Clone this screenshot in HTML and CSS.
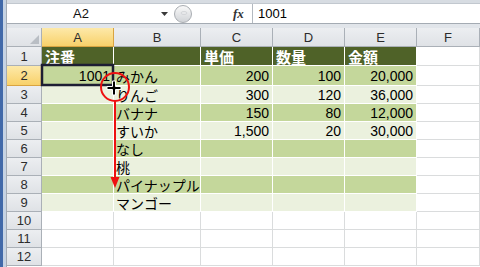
FILE: index.html
```html
<!DOCTYPE html>
<html lang="ja">
<head>
  <meta charset="UTF-8">
  <title>注番 - Excel</title>
  <link rel="stylesheet" href="styles.css">
</head>
<body>
  <div class="window">
    <div class="edge"></div>
    <div class="main">
      <div class="ribbon-edge"></div>

      <!-- Name box + formula bar -->
      <div class="formula-bar">
        <div class="name-box">A2</div>
        <div class="name-drop">
          <svg width="7" height="4" viewBox="0 0 7 4"><path d="M0 0h7L3.5 4z" fill="#3a3a3a"/></svg>
        </div>
        <svg class="splitter" width="20" height="19" viewBox="0 0 20 19">
          <defs>
            <linearGradient id="knob" x1="0" y1="0" x2="0" y2="1">
              <stop offset="0" stop-color="#fafafa"/>
              <stop offset="1" stop-color="#cfd2d6"/>
            </linearGradient>
          </defs>
          <circle cx="11" cy="10" r="8.5" fill="url(#knob)" stroke="#a9adb2"/>
          <ellipse cx="12" cy="9" rx="3" ry="1.5" fill="#e9eaec" stroke="#c4c7cb" stroke-width="0.6"/>
        </svg>
        <div class="fx">fx</div>
        <div class="formula-input">1001</div>
      </div>
      <div class="bar-gap"></div>

      <!-- Worksheet -->
      <div class="sheet">
        <div class="hd corner"><span class="corner-tri"></span></div>
        <div class="hd sel">A</div>
        <div class="hd">B</div>
        <div class="hd">C</div>
        <div class="hd">D</div>
        <div class="hd">E</div>
        <div class="hd">F</div>

        <div class="hd">1</div>
        <div class="cell t-head">注番</div>
        <div class="cell t-head"></div>
        <div class="cell t-head">単価</div>
        <div class="cell t-head">数量</div>
        <div class="cell t-head">金額</div>
        <div class="cell"></div>

        <div class="hd sel">2</div>
        <div class="cell t-a num">1001</div>
        <div class="cell t-a">みかん</div>
        <div class="cell t-a num">200</div>
        <div class="cell t-a num">100</div>
        <div class="cell t-a num">20,000</div>
        <div class="cell"></div>

        <div class="hd">3</div>
        <div class="cell t-b"></div>
        <div class="cell t-b">りんご</div>
        <div class="cell t-b num">300</div>
        <div class="cell t-b num">120</div>
        <div class="cell t-b num">36,000</div>
        <div class="cell"></div>

        <div class="hd">4</div>
        <div class="cell t-a"></div>
        <div class="cell t-a">バナナ</div>
        <div class="cell t-a num">150</div>
        <div class="cell t-a num">80</div>
        <div class="cell t-a num">12,000</div>
        <div class="cell"></div>

        <div class="hd">5</div>
        <div class="cell t-b"></div>
        <div class="cell t-b">すいか</div>
        <div class="cell t-b num">1,500</div>
        <div class="cell t-b num">20</div>
        <div class="cell t-b num">30,000</div>
        <div class="cell"></div>

        <div class="hd">6</div>
        <div class="cell t-a"></div>
        <div class="cell t-a">なし</div>
        <div class="cell t-a"></div>
        <div class="cell t-a"></div>
        <div class="cell t-a"></div>
        <div class="cell"></div>

        <div class="hd">7</div>
        <div class="cell t-b"></div>
        <div class="cell t-b">桃</div>
        <div class="cell t-b"></div>
        <div class="cell t-b"></div>
        <div class="cell t-b"></div>
        <div class="cell"></div>

        <div class="hd">8</div>
        <div class="cell t-a"></div>
        <div class="cell t-a">パイナップル</div>
        <div class="cell t-a"></div>
        <div class="cell t-a"></div>
        <div class="cell t-a"></div>
        <div class="cell"></div>

        <div class="hd">9</div>
        <div class="cell t-b"></div>
        <div class="cell t-b">マンゴー</div>
        <div class="cell t-b"></div>
        <div class="cell t-b"></div>
        <div class="cell t-b"></div>
        <div class="cell"></div>

        <div class="hd">10</div>
        <div class="cell"></div><div class="cell"></div><div class="cell"></div>
        <div class="cell"></div><div class="cell"></div><div class="cell"></div>

        <div class="hd">11</div>
        <div class="cell"></div><div class="cell"></div><div class="cell"></div>
        <div class="cell"></div><div class="cell"></div><div class="cell"></div>

        <div class="hd">12</div>
        <div class="cell"></div><div class="cell"></div><div class="cell"></div>
        <div class="cell"></div><div class="cell"></div><div class="cell"></div>
      </div>
    </div>

    <!-- Active cell, drag marker and mouse cursor drawn over the grid -->
    <svg class="overlay" width="480" height="267" viewBox="0 0 480 267">
      <rect x="42" y="65" width="71" height="20" fill="none" stroke="#1d1d33" stroke-width="2.5"/>
      <circle cx="115" cy="87" r="14" fill="none" stroke="#ee1111" stroke-width="2"/>
      <line x1="115" y1="101" x2="115" y2="179" stroke="#ee1111" stroke-width="2"/>
      <path d="M110.5 177h9L115 188z" fill="#ee1111"/>
      <path d="M112.5 81h3v5.5h5.5v3h-5.5v5.5h-3v-5.5H107v-3h5.5z" fill="#000" stroke="#fff" stroke-width="1"/>
    </svg>
  </div>
</body>
</html>
```

FILE: styles.css
```css
* {
  box-sizing: border-box;
}

body {
  margin: 0;
  background: #fff;
  font-family: "Liberation Sans", "Noto Sans CJK JP", sans-serif;
  color: #000;
}

.window {
  position: relative;
  display: flex;
  width: 480px;
  height: 267px;
  overflow: hidden;
}

/* Blue window frame on the left */
.edge {
  width: 7px;
  flex: none;
  background: linear-gradient(to right, #4169a9 0 3px, #c6d3e3 3px 6px, #a3abb5 6px 7px);
}

.main {
  flex: 1;
  display: flex;
  flex-direction: column;
  min-width: 0;
}

.ribbon-edge {
  height: 4px;
  background: #d7dce2;
  border-bottom: 1px solid #c2c8cf;
}

/* Formula bar */
.formula-bar {
  display: flex;
  align-items: center;
  height: 20px;
  background: #fff;
  border-bottom: 1px solid #a4abb3;
}
.name-box {
  width: 148px;
  text-align: center;
  font-size: 13px;
  color: #111;
}
.name-drop {
  width: 17px;
  display: flex;
  justify-content: center;
  padding-left: 2px;
}
.splitter {
  display: block;
}
.fx {
  width: 24px;
  margin-left: 36px;
  padding-left: 5px;
  font-family: "Liberation Serif", serif;
  font-style: italic;
  font-weight: bold;
  font-size: 13px;
  color: #333;
}
.formula-input {
  flex: 1;
  height: 100%;
  display: flex;
  align-items: center;
  padding-left: 5px;
  border-left: 1px solid #b3b9c0;
  font-size: 13px;
}

.bar-gap {
  height: 4px;
  background: #e1e5ea;
}

/* Grid */
.sheet {
  display: grid;
  grid-template-columns: 35px 72px 87px 72px 72px 72px 1fr;
  grid-template-rows: 19px 19px 20px repeat(10, 18px);
  font-size: 14px;
}

.hd {
  display: flex;
  align-items: center;
  justify-content: center;
  background: linear-gradient(#eceef1, #dfe2e6);
  border-right: 1px solid #aab0b7;
  border-bottom: 1px solid #aab0b7;
  font-size: 13px;
  color: #2c2c2c;
}
.hd.sel {
  background: linear-gradient(#fde9a9, #f8d16a);
  border-right-color: #d9a441;
  border-bottom-color: #d9a441;
}
.corner {
  justify-content: flex-end;
  align-items: flex-end;
  padding: 0 2px 2px 0;
}
.corner-tri {
  width: 0;
  height: 0;
  border-left: 9px solid transparent;
  border-bottom: 9px solid #b9bec4;
}

.cell {
  display: flex;
  align-items: center;
  padding: 0 2px;
  border-right: 1px solid #dadcdd;
  border-bottom: 1px solid #dadcdd;
  white-space: nowrap;
  overflow: hidden;
}
.num {
  justify-content: flex-end;
  padding-right: 3px;
}

/* Table style: dark header, banded rows */
.t-head,
.t-a,
.t-b {
  border-right-color: #fff;
  border-bottom-color: #fff;
}
.t-head {
  background: #4f6228;
  color: #fff;
  font-weight: bold;
  font-size: 15px;
  padding-left: 3px;
}
.t-a {
  background: #c4d79b;
}
.t-b {
  background: #ebf1de;
}

.overlay {
  position: absolute;
  left: 0;
  top: 0;
  pointer-events: none;
}
```
